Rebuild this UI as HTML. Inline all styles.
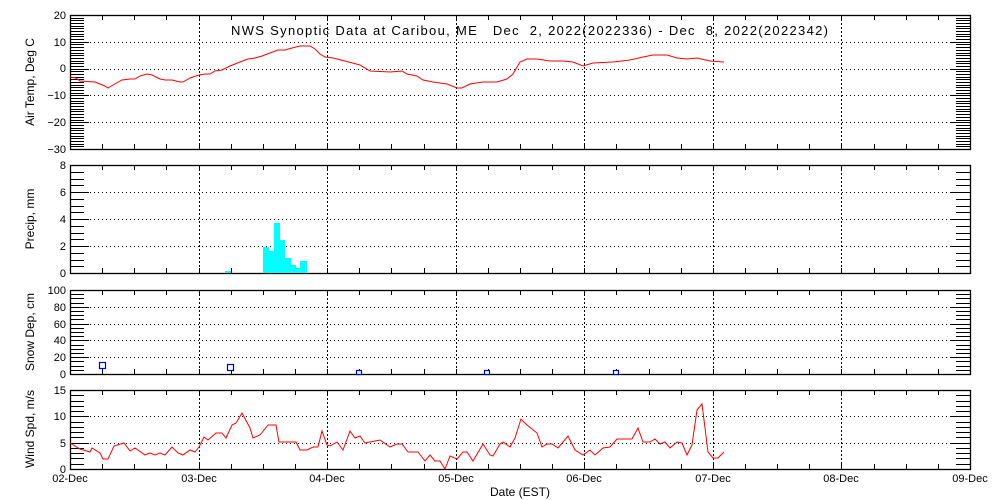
<!DOCTYPE html>
<html><head><meta charset="utf-8"><style>
html,body{margin:0;padding:0;background:#fff;width:1000px;height:500px;overflow:hidden}
svg text{font-family:"Liberation Sans","DejaVu Sans",sans-serif;font-size:11px;fill:#000}
</style></head><body>
<svg id="s" width="1000" height="500" viewBox="0 0 1000 500" xmlns="http://www.w3.org/2000/svg">
<g id="g"></g>
<text x="231" y="35" xml:space="preserve" textLength="597" lengthAdjust="spacing" style="font-size:13px;white-space:pre">NWS Synoptic Data at Caribou, ME   Dec  2, 2022(2022336) - Dec  8, 2022(2022342)</text>
<g text-anchor="end">
<text x="66" y="19">20</text><text x="66" y="46">10</text><text x="66" y="72">0</text><text x="66" y="99">−10</text><text x="66" y="126">−20</text><text x="66" y="153">−30</text>
<text x="66" y="169">8</text><text x="66" y="196">6</text><text x="66" y="223">4</text><text x="66" y="250">2</text><text x="66" y="277">0</text>
<text x="66" y="294">100</text><text x="66" y="311">80</text><text x="66" y="328">60</text><text x="66" y="344">40</text><text x="66" y="361">20</text><text x="66" y="378">0</text>
<text x="66" y="394">15</text><text x="66" y="420">10</text><text x="66" y="447">5</text><text x="66" y="473">0</text>
</g>
<g text-anchor="middle">
<text x="70" y="482">02-Dec</text><text x="199" y="482">03-Dec</text><text x="327" y="482">04-Dec</text><text x="456" y="482">05-Dec</text><text x="584" y="482">06-Dec</text><text x="713" y="482">07-Dec</text><text x="841" y="482">08-Dec</text><text x="970" y="482">09-Dec</text>
<text x="520" y="496" style="font-size:12px">Date (EST)</text>
<text transform="translate(34,82) rotate(-90)" style="font-size:12px">Air Temp, Deg C</text>
<text transform="translate(34,219) rotate(-90)" style="font-size:12px">Precip, mm</text>
<text transform="translate(34,332) rotate(-90)" style="font-size:12px">Snow Dep, cm</text>
<text transform="translate(34,429) rotate(-90)" style="font-size:12px">Wind Spd, m/s</text>
</g>
<g fill="#00ffff">
<rect x="225" y="271" width="6" height="2"/>
<rect x="263" y="247" width="6" height="26"/><rect x="269" y="251" width="5" height="22"/><rect x="274" y="223" width="6" height="50"/><rect x="280" y="240" width="5" height="33"/><rect x="285" y="258" width="6" height="15"/><rect x="291" y="265" width="5" height="8"/><rect x="296" y="268" width="4" height="5"/><rect x="300" y="261" width="7" height="12"/>
</g>
<polyline fill="none" stroke="#f00" stroke-width="1" points="70,77 76,78 80,81 95,82 105,86 108,88 113,85 122,80 130,79 135,79 140,76 147,74 152,75 160,79 165,80 172,80 180,82 183,82 190,78 199,75 205,74 210,74 215,71 222,70 230,66 240,62 248,59 255,58 262,56 270,53 278,50 285,50 292,48 300,46 310,46 315,49 320,54 325,57 333,58 345,61 360,65 370,71 390,72 402,71 407,74 417,76 423,80 433,82 447,84 457,88 462,88 470,84 483,82 497,82 507,79 513,74 520,62 527,59 537,59 550,61 563,61 573,62 583,66 593,63 613,62 630,60 643,57 653,55 667,55 677,58 687,59 697,58 710,61 724,62"/>
<polyline fill="none" stroke="#f00" stroke-width="1" points="70,443 80,449 90,452 92,448 100,453 103,459 108,459 114,446 124,443 130,451 135,448 145,455 150,453 155,455 160,453 165,455 172,447 178,453 183,455 190,450 195,452 199,447 204,437 208,440 216,433 222,433 226,438 232,425 236,423 242,413 250,428 253,438 260,435 268,425 276,425 279,442 296,442 300,450 307,450 313,447 318,447 322,431 327,445 330,446 337,442 343,450 350,431 355,438 360,436 365,443 370,442 380,440 390,447 397,444 402,444 408,452 418,452 425,461 430,455 435,461 440,461 445,469 450,456 457,459 463,452 467,452 473,461 483,444 490,455 493,456 500,444 503,442 510,447 515,438 521,419 527,425 537,433 542,447 547,444 552,444 558,448 568,436 575,450 583,455 590,450 595,455 603,448 610,447 617,439 632,439 638,428 643,442 650,442 655,439 660,444 665,442 670,448 677,442 682,443 687,455 692,445 697,410 702,404 708,452 713,458 718,458 724,452"/>
</svg>
<script>
(function(){
var g=document.getElementById('g'),h='';
function L(x1,y1,x2,y2,st){h+='<line x1="'+x1+'" y1="'+y1+'" x2="'+x2+'" y2="'+y2+'" stroke="#000" stroke-width="1" '+(st||'')+'/>';}
var X0=70,X1=970,DW=900/7;
var P=[[15,149,50,10,1],[165,273,8,2,0.5],[290,374,100,20,5],[390,469,15,5,1]];
P.forEach(function(p){
 var t=p[0],b=p[1],rng=p[2],maj=p[3],mn=p[4],sc=(b-t)/rng;
 for(var d=1;d<7;d++){var x=Math.round(X0+d*DW)+0.5;L(x,t,x,b,'stroke-dasharray="2,2"');}
 for(var v=maj;v<rng;v+=maj){var y=Math.round(b-v*sc)+0.5;L(X0,y,X1,y,'stroke-dasharray="1,3"');L(X0,y,X0+19,y);L(X1-19,y,X1,y);}
 for(var v=0;v<=rng+0.001;v+=mn){var y=Math.round(b-v*sc)+0.5;L(X0,y,X0+14,y);L(X1-14,y,X1,y);}
 for(var k=1;k<28;k++){var x=Math.round(X0+k*DW/4)+0.5;L(x,t,x,t+5);L(x,b,x,b-5);}
 h+='<rect x="'+(X0+0.5)+'" y="'+(t+0.5)+'" width="'+(X1-X0)+'" height="'+(b-t)+'" fill="none" stroke="#000" stroke-width="1.3"/>';
});
h+='<g fill="#fff" stroke="#0000cc" stroke-width="1.2"><rect x="99.5" y="362.5" width="6" height="6"/><rect x="227.5" y="364.5" width="6" height="6"/><rect x="356.5" y="370.5" width="5" height="4"/><rect x="484.5" y="370.5" width="5" height="4"/><rect x="613.5" y="370.5" width="5" height="4"/></g>';
g.innerHTML=h;
})();
</script>
</body></html>
